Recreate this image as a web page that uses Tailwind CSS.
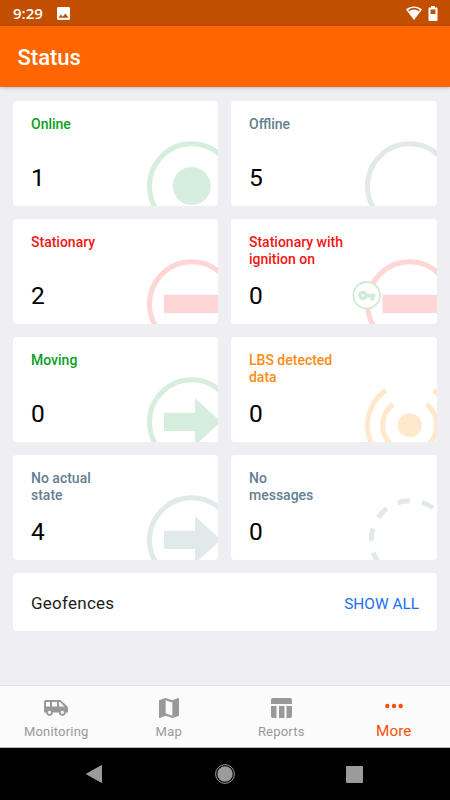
<!DOCTYPE html>
<html lang="en">
<head>
<meta charset="utf-8">
<title>Status</title>
<script src="https://cdn.jsdelivr.net/npm/@tailwindcss/browser@4"></script>
</head>
<body class="w-[450px] h-[800px] overflow-hidden bg-[#efeef3] font-['Roboto',sans-serif] flex flex-col">
  <div class="h-[26px] shrink-0 bg-[#c24e00] flex items-center justify-between pl-[13px] pr-[12px] text-white">
    <div class="flex items-center gap-[13px]">
      <span class="w-[31px] pt-[1px] text-[15px] leading-[25px] font-semibold font-['Open_Sans',sans-serif]">9:29</span>
      <svg class="w-[13px] h-[13px]" viewBox="3 3 18 18" fill="currentColor"><path d="M21 19V5c0-1.100-.9-2-2-2H5c-1.100 0-2 .9-2 2v14c0 1.100.9 2 2 2h14c1.100 0 2-.9 2-2zM8.500 13.500l2.500 3.010L14.500 12l4.500 6H5l3.500-4.500z"/></svg>
    </div>
    <div class="flex items-center gap-[6px]">
      <svg class="w-[16px] h-[14px]" viewBox="0 0 16 14"><path d="M0 3.600C4.500-.7 11.500-.7 16 3.600L8 14z" fill="#fff"/><path d="M2.700 4.600C6 2.200 10 2.200 13.300 4.600" fill="none" stroke="#c24e00" stroke-width="1.600"/></svg>
      <svg class="w-[10px] h-[15px]" viewBox="0 0 10 15"><path d="M3 0h4v1.500h1.500q1 0 1 1V14q0 1-1 1h-7q-1 0-1-1V2.500q0-1 1-1H3z" fill="#fff"/><path d="M2.500 3.500h5v4.500h-5z" fill="#c24e00"/></svg>
    </div>
  </div>
  <header class="h-[61px] shrink-0 bg-[#ff6600] flex items-center pl-[17.500px] pt-[2px] shadow-[0_1px_3px_rgba(0,0,0,0.22)]">
    <h1 class="text-white text-[22px] font-medium">Status</h1>
  </header>

  <main class="flex-1 px-[13px] pt-[14px] flex flex-col gap-[13px]">
    <div class="grid grid-cols-[205.300px_206px] auto-rows-[105px] gap-x-[12.700px] gap-y-[13px]">
      <section class="relative overflow-hidden rounded-[4px] bg-white pl-[18px] pt-[15px]">
        <svg class="absolute left-0 top-0 w-[206px] h-[105px]" fill="none"><circle cx="178.700" cy="85" r="42.200" stroke="#d5eedd" stroke-width="5"/><circle cx="178.700" cy="85" r="19" fill="#d5eedd"/></svg>
        <h2 class="relative h-[48px] w-[110px] text-[14px] leading-[16.500px] font-medium text-[#0a9f22]">Online</h2>
        <p class="relative text-[24.500px] leading-[28px] text-black">1</p>
      </section>
      <section class="relative overflow-hidden rounded-[4px] bg-white pl-[18px] pt-[15px]">
        <svg class="absolute left-0 top-0 w-[206px] h-[105px]" fill="none"><circle cx="178.700" cy="85" r="42.200" stroke="#e2e9eb" stroke-width="5"/></svg>
        <h2 class="relative h-[48px] w-[110px] text-[14px] leading-[16.500px] font-medium text-[#648090]">Offline</h2>
        <p class="relative text-[24.500px] leading-[28px] text-black">5</p>
      </section>
      <section class="relative overflow-hidden rounded-[4px] bg-white pl-[18px] pt-[15px]">
        <svg class="absolute left-0 top-0 w-[206px] h-[105px]" fill="none"><circle cx="178.700" cy="85" r="42.200" stroke="#ffd6d6" stroke-width="5"/><path d="M151 75.700h56v18.200h-56z" fill="#ffd6d6"/></svg>
        <h2 class="relative h-[48px] w-[110px] text-[14px] leading-[16.500px] font-medium text-[#f51414]">Stationary</h2>
        <p class="relative text-[24.500px] leading-[28px] text-black">2</p>
      </section>
      <section class="relative overflow-hidden rounded-[4px] bg-white pl-[18px] pt-[15px]">
        <svg class="absolute left-0 top-0 w-[206px] h-[105px]" fill="none"><circle cx="178.700" cy="85" r="42.200" stroke="#ffd6d6" stroke-width="5"/><path d="M151.500 75.700h56v18.200h-56z" fill="#ffd6d6"/><circle cx="135.700" cy="76.300" r="13.300" fill="#fff" stroke="#d0ebd8" stroke-width="1.800"/><path transform="translate(126.500 67.300) scale(.77)" fill="#d0ebd8" stroke="#d0ebd8" stroke-width=".7" d="M12.650 10C11.830 7.670 9.610 6 7 6c-3.310 0-6 2.690-6 6s2.690 6 6 6c2.610 0 4.830-1.670 5.650-4H17v4h4v-4h2v-4H12.650zM7 14c-1.100 0-2-.9-2-2s.9-2 2-2 2 .9 2 2-.9 2-2 2z"/></svg>
        <h2 class="relative h-[48px] w-[110px] text-[14px] leading-[16.500px] font-medium text-[#f51414]">Stationary with<br>ignition on</h2>
        <p class="relative text-[24.500px] leading-[28px] text-black">0</p>
      </section>
      <section class="relative overflow-hidden rounded-[4px] bg-white pl-[18px] pt-[15px]">
        <svg class="absolute left-0 top-0 w-[206px] h-[105px]" fill="none"><circle cx="178.700" cy="85" r="42.200" stroke="#d5eedd" stroke-width="5"/><path d="M151 75.700h31V61.300l26 23.500-26 23.500V94h-31z" fill="#d5eedd"/></svg>
        <h2 class="relative h-[48px] w-[110px] text-[14px] leading-[16.500px] font-medium text-[#0a9f22]">Moving</h2>
        <p class="relative text-[24.500px] leading-[28px] text-black">0</p>
      </section>
      <section class="relative overflow-hidden rounded-[4px] bg-white pl-[18px] pt-[15px]">
        <svg class="absolute left-0 top-0 w-[206px] h-[105px]" fill="none"><g stroke="#ffe8cb" stroke-width="5"><path d="M154.900 53.400A42.200 42.200 0 0 0 154.900 123.200M202.500 53.400A42.200 42.200 0 0 1 202.500 123.200"/><path d="M162 67.200A26.800 26.800 0 0 0 162 109.400M195.400 67.200A26.800 26.800 0 0 1 195.400 109.400"/></g><circle cx="178.700" cy="88.300" r="12" fill="#ffe8cb"/></svg>
        <h2 class="relative h-[48px] w-[110px] text-[14px] leading-[16.500px] font-medium text-[#fb8c14]">LBS detected<br>data</h2>
        <p class="relative text-[24.500px] leading-[28px] text-black">0</p>
      </section>
      <section class="relative overflow-hidden rounded-[4px] bg-white pl-[18px] pt-[15px]">
        <svg class="absolute left-0 top-0 w-[206px] h-[105px]" fill="none"><circle cx="178.700" cy="85" r="42.200" stroke="#e2e9eb" stroke-width="5"/><path d="M151 75.700h31V61.300l26 23.500-26 23.500V94h-31z" fill="#e2e9eb"/></svg>
        <h2 class="relative h-[48px] w-[110px] text-[14px] leading-[16.500px] font-medium text-[#648090]">No actual<br>state</h2>
        <p class="relative text-[24.500px] leading-[28px] text-black">4</p>
      </section>
      <section class="relative overflow-hidden rounded-[4px] bg-white pl-[18px] pt-[15px]">
        <svg class="absolute left-0 top-0 w-[206px] h-[105px]" fill="none"><circle cx="179.500" cy="85" r="39.300" stroke="#e2e9e9" stroke-width="5" pathLength="20" stroke-dasharray="1 1" transform="rotate(179 179.500 85)"/></svg>
        <h2 class="relative h-[48px] w-[110px] text-[14px] leading-[16.500px] font-medium text-[#648090]">No<br>messages</h2>
        <p class="relative text-[24.500px] leading-[28px] text-black">0</p>
      </section>
    </div>
    <section class="h-[58px] rounded-[4px] bg-white flex items-center justify-between px-[18px] pt-[4px]">
      <h2 class="text-[17px] tracking-[0.25px] text-[#1c1c1c]">Geofences</h2>
      <a class="pt-[1px] text-[15.400px] text-[#1d6ff2]">SHOW ALL</a>
    </section>
  </main>

  <nav class="h-[63px] shrink-0 bg-[#fbfbfb] border-t border-[#e4e3e7] border-b border-b-[#b9b9b9] grid grid-cols-4 text-[#999999] text-[13px]">
    <a class="flex flex-col items-center pt-[12px]">
      <svg class="w-[24px] h-[20px]" viewBox="0 0 24 20"><path fill="currentColor" fill-rule="evenodd" d="M1.800 2h14.700L23.500 8.500Q24 9 24 10v4.500h-2.500a3 3 0 0 1-6 0H8.500a3 3 0 0 1-6 0H0V3.800Q0 2 1.800 2zM2 4v4.500h4V4zM8 4v4.500h5V4zM15 4v4.500h5.500L16 4z"/><g fill="none" stroke="currentColor" stroke-width="1.700"><circle cx="5.500" cy="14.300" r="2.500" fill="#fbfbfb"/><circle cx="18.300" cy="14.300" r="2.500" fill="#fbfbfb"/></g></svg>
      <span class="mt-[6.400px] leading-[16px] tracking-[0.2px]">Monitoring</span>
    </a>
    <a class="flex flex-col items-center pt-[12px]">
      <svg class="w-[20px] h-[20px]" viewBox="3 3 18 18"><path fill="currentColor" d="M20.500 3l-.16.030L15 5.100 9 3 3.360 4.900c-.21.070-.36.250-.36.480V20.500c0 .28.220.5.500.5l.16-.03L9 18.900l6 2.100 5.640-1.900c.21-.07.36-.25.360-.48V3.500c0-.28-.22-.5-.5-.5zM15 19l-6-2.110V5l6 2.110V19z"/></svg>
      <span class="mt-[6.400px] leading-[16px] tracking-[0.2px]">Map</span>
    </a>
    <a class="flex flex-col items-center pt-[12px]">
      <svg class="w-[21px] h-[20px]" viewBox="0 0 21 20" fill="currentColor"><path d="M2 0h17q2 0 2 2v4H0V2Q0 0 2 0zM0 8h5.500v12H2q-2 0-2-2zM8 8h5.500v12H8zM15.500 8H21v10q0 2-2 2h-3.500z"/></svg>
      <span class="mt-[6.400px] leading-[16px] tracking-[0.2px]">Reports</span>
    </a>
    <a class="flex flex-col items-center pt-[10px] text-[#fa5008]">
      <svg class="w-[18px] h-[20px]" viewBox="0 0 18 20" fill="currentColor"><circle cx="2.300" cy="10" r="2.200"/><circle cx="9" cy="10" r="2.200"/><circle cx="15.700" cy="10" r="2.200"/></svg>
      <span class="mt-[6.400px] text-[15.300px] leading-[18px] tracking-[0.1px]">More</span>
    </a>
  </nav>
  <div class="h-[52px] shrink-0 bg-black flex items-center justify-between pl-[86px] pr-[87px] text-[#9b9b9b]">
    <svg class="w-[16px] h-[18px]" viewBox="0 0 16 18"><path fill="currentColor" stroke="currentColor" stroke-linejoin="round" d="M15.500.6v16.800L.5 9z"/></svg>
    <svg class="w-[20px] h-[20px] ml-[1px]" viewBox="0 0 20 20"><circle cx="10" cy="10" r="9.400" fill="none" stroke="currentColor"/><circle cx="10" cy="10" r="7.700" fill="currentColor"/></svg>
    <svg class="w-[17px] h-[17px]" viewBox="0 0 17 17"><rect width="17" height="17" rx="1" fill="currentColor"/></svg>
  </div>
</body>
</html>
